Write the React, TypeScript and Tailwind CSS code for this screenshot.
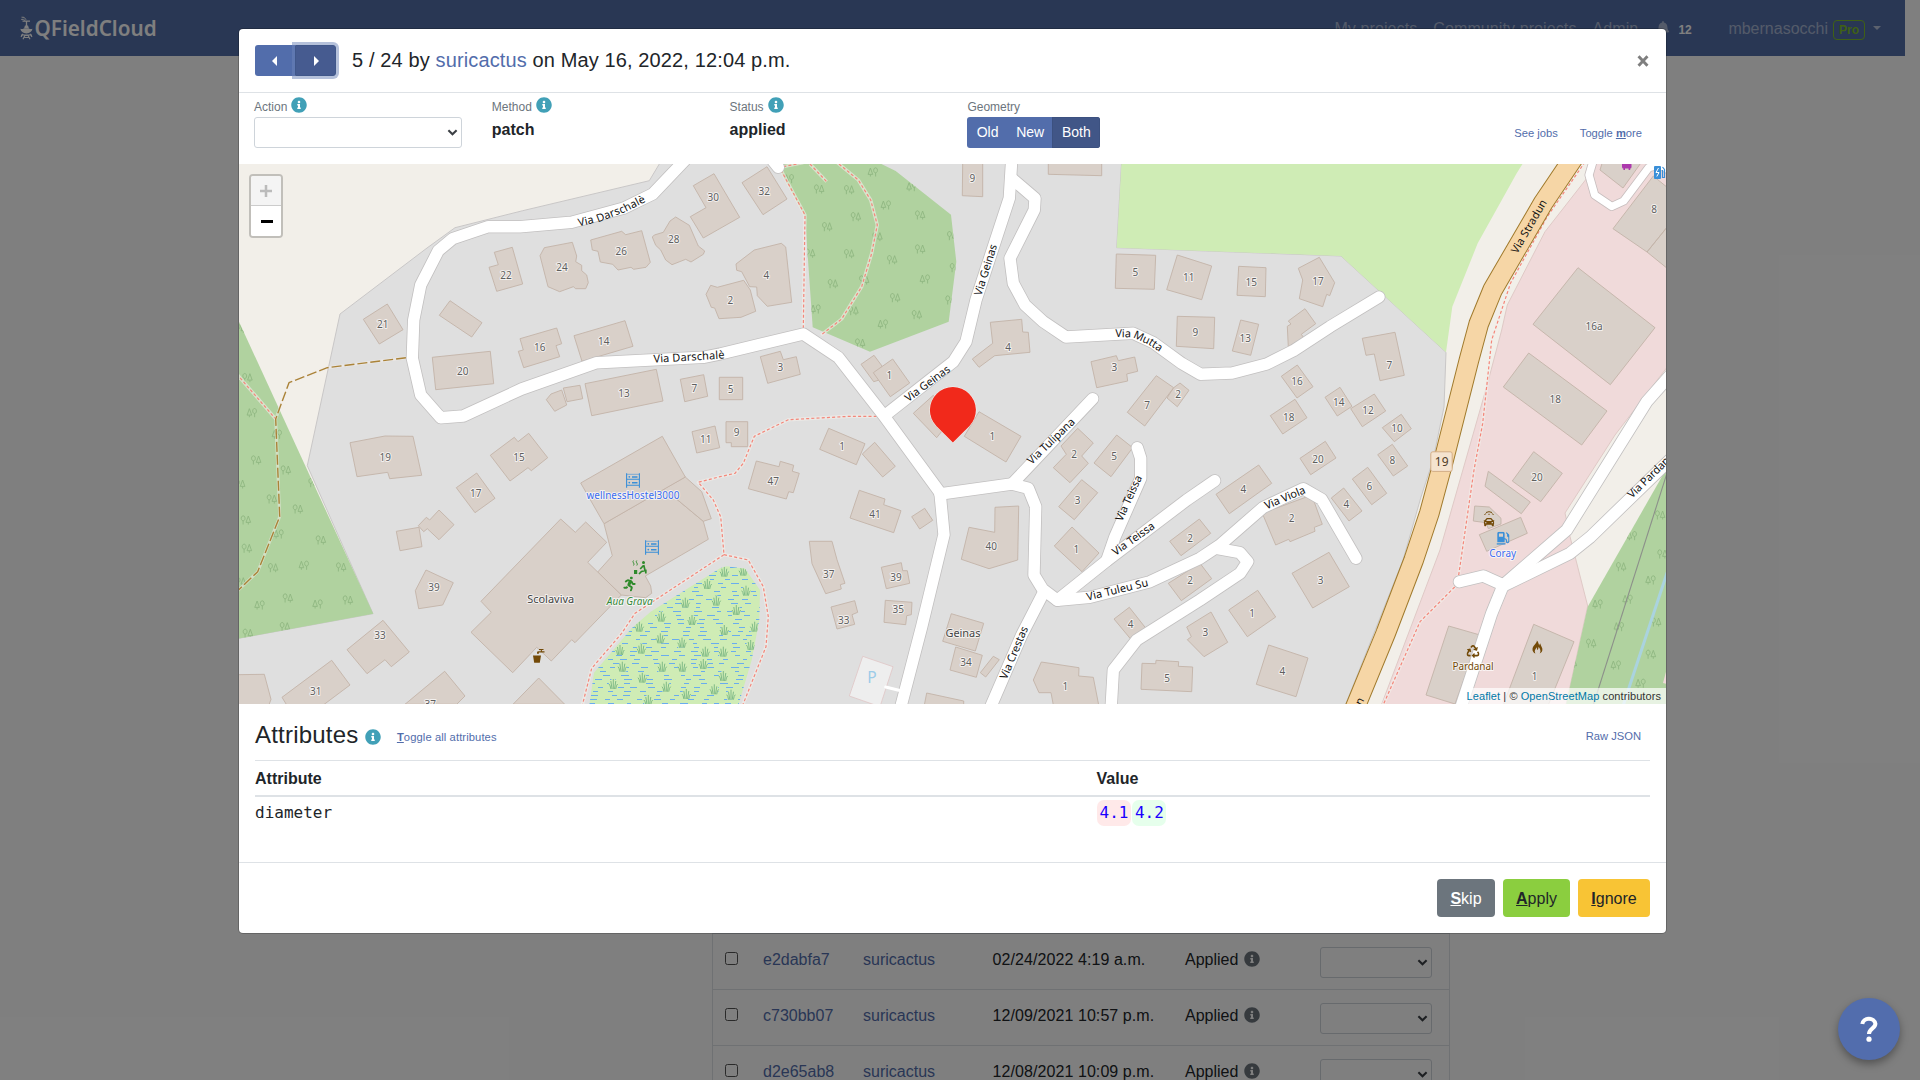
import React from "react";
import { FaRunning, FaRecycle, FaGasPump, FaCar, FaBell, FaInfoCircle } from "react-icons/fa";

type Origin = [number, number];

// Map sheets: every sheet has its own origin; geometry is digitised in thirds of a pixel.
const NW: Origin = [0, 0];
const N: Origin = [520, 90];
const NE: Origin = [1040, 160];
const W: Origin = [230, 300];
const C: Origin = [720, 300];
const E: Origin = [1200, 300];

function xy(o: Origin, x: number, y: number): [number, number] {
  return [+(o[0] + x / 3).toFixed(1), +(o[1] + y / 3).toFixed(1)];
}
function pts(o: Origin, s: string): string {
  return s
    .trim()
    .split(/\s+/)
    .map((p) => {
      const [a, b] = p.split(",").map(Number);
      return xy(o, a, b).join(",");
    })
    .join(" ");
}
function line(...parts: [Origin, string][]): string {
  return parts.map(([o, s]) => pts(o, s)).join(" ");
}

type Building = [Origin, string, string?, number?, number?];

const buildings: Building[] = [
  [NW, "1483,757 1537,742 1568,852 1490,874 1467,802 1495,794", "22", 1518, 826],
  [W, "400,58 472,12 519,89 448,132", "21", 458, 73],
  [W, "660,2 756,68 725,111 628,46"],
  [W, "607,172 781,154 791,251 617,269", "20", 698, 213],
  [W, "870,116 980,84 995,131 978,137 989,170 881,203 865,154 880,150", "16", 929, 143],
  [W, "1032,107 1185,62 1209,139 1056,184", "14", 1121, 124],
  [W, "1065,251 1279,208 1299,303 1085,347", "13", 1182, 279],
  [W, "1351,238 1421,224 1433,289 1364,305", "7", 1393, 265],
  [W, "1000,264 1050,256 1058,296 1011,305"],
  [W, "949,299 963,282 995,270 1010,315 974,334"],
  [W, "360,428 465,408 549,409 575,526 479,536 473,517 381,530", "19", 466, 473],
  [W, "781,466 853,412 864,425 896,400 953,473 904,512 894,503 840,543", "15", 867, 471],
  [W, "679,563 740,519 795,595 735,638", "17", 737, 579],
  [W, "499,694 567,682 576,740 510,752"],
  [W, "565,677 589,652 599,660 627,630 672,674 627,719 592,686 581,695"],
  [W, "588,810 670,848 638,915 566,926 556,872", "39", 612, 861],
  [W, "351,1049 459,961 538,1056 484,1100 465,1079 411,1121", "33", 450, 1007],
  [W, "156,1192 305,1081 360,1155 280,1215 170,1215", "31", 257, 1175],
  [W, "20,1124 103,1123 123,1198 115,1220 20,1220"],
  [W, "525,1213 644,1114 705,1188 680,1213", "37", 601, 1213],
  [W, "849,1213 926,1134 1004,1213"],
  [W, "1386,395 1455,378 1469,443 1400,459", "11", 1427, 419],
  [C, "18,365 83,365 83,440 34,440 34,428 18,428", "9", 50, 398],
  [C, "-2,232 68,232 68,299 -2,299", "5", 32, 267],
  [W, "1122,671 1300,568 1325,585 1420,664 1435,718 1246,828 1262,858 1265,880 1247,893 1174,885 1103,816 1147,767"],
  [W, "1366,531 1415,575 1444,656 1420,664 1325,585 1300,568"],
  [W, "1052,549 1297,409 1366,531 1122,671"],
  [W, "992,657 1036,697 1067,666 1130,727 1073,787 1103,816 1174,885 1035,1028 1025,1019 964,1083 920,1042 848,1118 723,997 784,937 753,904"],
  [N, "73,473 157,457 170,498 167,515 185,526 185,542 200,555 205,578 197,596 167,596 160,590 119,605 84,590 60,497", "24", 126, 533],
  [N, "212,450 305,424 317,434 365,422 391,517 378,532 341,538 333,532 294,540 278,523 241,516 234,484 217,480", "26", 304, 484],
  [N, "397,441 403,435 430,427 450,393 467,381 508,406 535,468 554,483 550,493 513,516 497,508 456,524 437,510 422,480 407,466", "28", 461, 448],
  [N, "520,287 582,251 659,382 550,444 511,380 558,353", "30", 580, 321],
  [N, "666,278 741,230 801,327 729,374", "32", 733, 303],
  [N, "648,522 703,480 784,460 797,471 815,637 742,649 712,617 710,591 689,590 665,545 650,541", "4", 739, 557],
  [N, "572,586 592,592 671,571 691,600 707,664 663,682 597,686 584,654 574,652 558,613", "2", 631, 632],
  [N, "1328,215 1388,215 1388,320 1327,317", "9", 1357, 265],
  [NE, "25,-5 185,-5 185,47 25,43"],
  [NE, "229,282 347,286 343,388 226,385", "5", 286, 337],
  [NE, "412,285 515,318 485,419 380,389", "11", 446, 353],
  [NE, "596,319 678,323 676,410 591,406", "15", 634, 366],
  [NE, "775,325 838,292 884,368 869,407 860,403 848,440 778,416 788,360", "17", 834, 363],
  [NE, "412,469 524,472 521,566 409,559", "9", 466, 518],
  [NE, "602,480 656,493 632,586 577,573", "13", 616, 534],
  [NE, "745,483 795,446 827,491 784,523 791,533 745,560 742,499 753,492"],
  [E, "487,115 585,97 613,226 540,242 523,162 498,166", "7", 568, 196],
  [C, "121,170 181,154 190,179 229,170 241,223 143,250", "3", 181, 203],
  [C, "423,193 462,166 486,198 478,240 461,245"],
  [C, "460,218 518,177 569,249 511,290", "1", 508, 227],
  [C, "811,67 905,58 908,96 925,97 930,157 824,167 777,202 757,177 818,130", "4", 864, 143],
  [C, "1113,185 1189,167 1195,182 1244,171 1253,214 1220,222 1223,243 1130,263", "3", 1183, 202],
  [C, "1309,227 1361,263 1274,378 1222,337", "7", 1281, 317],
  [C, "1380,249 1407,271 1372,320 1341,294 1361,263", "2", 1374, 284],
  [C, "580,340 640,286 700,350 650,413"],
  [C, "777,335 903,409 858,486 733,409", "1", 817, 410],
  [C, "326,385 435,431 409,494 299,448", "1", 366, 440],
  [C, "464,427 526,499 488,531 427,462"],
  [C, "109,483 177,500 181,484 221,496 217,514 238,520 220,578 206,575 199,597 85,566", "47", 160, 543],
  [C, "418,571 495,597 491,614 543,632 521,698 390,654", "41", 465, 644],
  [C, "575,650 614,625 638,661 599,687"],
  [C, "825,622 896,618 893,780 807,806 724,778 747,682 824,697", "40", 814, 739],
  [C, "268,724 336,724 351,779 375,850 361,854 364,867 317,881 276,791", "37", 326, 822],
  [C, "484,802 544,788 548,812 562,812 569,850 499,866", "39", 528, 832],
  [C, "333,921 404,902 413,937 396,944 404,973 351,987", "33", 371, 960],
  [C, "496,901 576,907 574,944 560,947 557,974 492,967", "35", 535, 929],
  [C, "694,941 791,970 766,1053 668,1024"],
  [C, "707,1041 787,1066 769,1132 690,1110", "34", 738, 1088],
  [C, "820,1069 838,1079 797,1131 781,1118"],
  [C, "620,1179 731,1203 731,1220 612,1220"],
  [C, "964,1086 1077,1103 1076,1128 1120,1132 1136,1215 1000,1215 993,1178 957,1178 940,1140", "1", 1036, 1159],
  [C, "1266,1090 1307,1091 1308,1081 1376,1085 1375,1099 1418,1101 1415,1175 1263,1168", "5", 1341, 1136],
  [C, "1073,385 1120,429 1085,468 1105,490 1050,548 1000,503 1039,463 1023,438", "2", 1062, 463],
  [C, "1190,405 1238,443 1173,530 1122,489", "5", 1182, 469],
  [C, "1085,539 1133,578 1063,659 1016,620", "3", 1073, 600],
  [C, "1056,681 1137,759 1086,815 1003,738", "1", 1069, 748],
  [C, "1438,657 1472,700 1383,767 1349,724", "2", 1410, 714],
  [C, "1440,790 1475,836 1384,902 1345,850", "2", 1410, 842],
  [C, "1228,922 1280,988 1236,1022 1182,957", "4", 1232, 973],
  [C, "1400,981 1473,936 1523,1027 1452,1070 1402,1019 1414,1010", "3", 1456, 998],
  [E, "48,583 176,495 215,550 88,641", "4", 130, 569],
  [E, "300,475 376,424 408,474 332,524", "20", 354, 477],
  [E, "211,347 285,298 321,353 248,402", "18", 266, 352],
  [E, "244,229 292,195 339,260 291,294", "16", 291, 245],
  [E, "375,292 420,262 456,319 412,348", "14", 416, 306],
  [E, "452,326 523,282 557,333 487,380", "12", 504, 332],
  [E, "547,383 604,343 634,386 583,425", "10", 591, 386],
  [E, "533,464 577,433 623,498 580,528", "8", 577, 482],
  [E, "457,537 503,502 560,580 515,614", "6", 508, 560],
  [E, "394,594 431,564 486,633 447,663", "4", 439, 614],
  [E, "187,640 335,585 367,673 343,682 345,694 270,725 266,718 227,735", "2", 275, 656],
  [E, "276,820 387,757 448,860 338,924", "3", 362, 842],
  [E, "86,930 173,871 227,951 142,1010", "1", 156, 941],
  [E, "206,1035 324,1074 288,1190 169,1153", "4", 247, 1113],
  [E, "1134,-97 1365,83 1231,254 999,73", "16a", 1182, 80],
  [E, "986,159 1221,333 1145,435 910,261", "18", 1066, 299],
  [E, "1001,455 1087,520 1022,605 937,543", "20", 1011, 532],
  [E, "865,514 991,606 964,641 855,559"],
  [E, "824,618 868,621 903,655 903,672 865,686 858,668 820,663"],
  [E, "838,704 962,652 982,700 860,754"],
  [E, "746,978 840,1005 765,1212 678,1185"],
  [E, "1001,973 1122,1025 1045,1215 910,1215", "1", 1004, 1130],
  [E, "1239,-214 1360,-372 1404,-336 1404,-93 1341,-144", "8", 1362, -273],
  [E, "1341,-144 1404,-222"],
  [E, "1209,-420 1200,-390 1269,-336 1329,-420"],
];

const roads: string[] = [
  line([N, "500,205 398,312 310,355 155,397 0,410"], [NW, "1465,680 1358,716 1315,752 1262,855 1241,960"], [W, "547,175 572,285 632,353 700,348 875,267 1100,188 1420,172"], [C, "0,162 250,102 355,172 490,345 660,578 672,704 605,980 540,1230"]),
  line([N, "1475,210 1468,325 1368,630"], [C, "738,125 700,185 505,338"]),
  line([N, "1478,268 1545,325 1543,360 1470,505 1480,580 1515,645"], [C, "970,65 1038,111 1240,100 1300,128 1385,190 1442,223"], [E, "97,219 200,192 280,152 390,80 537,-9"]),
  line([C, "880,548 1118,296"]),
  line([C, "660,582 875,552 925,565 947,620 942,825 968,868 1012,901 1110,892 1290,845"], [E, "0,775 60,735 190,622 310,566 365,598 468,775"]),
  line([E, "50,745 120,758 143,785 120,820 0,900"], [C, "1250,1020 1180,1110 1173,1230"]),
  line([C, "1012,901 1160,782 1400,600 1484,542"]),
  line([C, "1160,782 1185,710 1262,535 1262,475 1252,443"]),
  line([C, "972,875 905,1005 808,1230"]),
  line([N, "745,195 775,232"]),
  line([E, "778,845 850,828 910,855 1100,690 1340,305 1420,215"]),
  line([E, "910,858 1110,760 1170,712 1440,450"]),
  line([E, "910,855 875,940 780,1230"]),
];

const stradun = line([NE, "1600,-5 1510,128 1358,389 1316,492 1287,600"], [E, "731,480 688,640 641,780 557,1000 461,1233"]);
const lot = "1594,158 1589,175 1594.7,195 1611.8,206.5 1623.7,201 1648.6,167.7 1660,165 1672,172";

const footways: string[] = [
  line([N, "783,240 855,375 850,715"]),
  line([N, "945,212 1015,270 1052,330 1072,405 1055,490 1025,590 965,687 903,735"]),
  line([N, "870,222 920,275"]),
  line([N, "790,230 850,218"]),
  line([C, "470,349 390,349 205,359 103,409 70,490 45,520 0,530"], [W, "1405,547 1450,600 1472,650 1482,764 1215,940 1175,1000 1085,1105 1055,1223"]),
  line([C, "12,764 85,780 130,860 145,950 138,1040 65,1223"]),
  line([W, "20,222 137,357"]),
  "1585,162 1547,217 1510.6,283 " + line([E, "875,120 848,370 822,510 776,825 765,860 660,965 545,1225"]),
];

const track = line([W, "528,173 292,203 177,248 137,357 149,650 83,815 20,875"]);

const woodA = line([W, "20,50 430,941 20,1017"]);
const woodB = line([N, "785,215 1070,215 1127,243 1293,374 1309,515 1286,695 1050,785 878,712 855,380 783,247"]);
const woodC = "1668,466 1587.7,606.7 1565.7,706 1668,706";
const wetland = line([W, "1078,1216 1092,1118 1205,985 1262,935 1470,805 1490,799 1545,806 1590,870 1588,960 1565,1080 1525,1216"]);

// x,y pairs; a trailing "f" mirrors the tree pair.
const trees: [Origin, string][] = [
  [W, "32,85 52,233 66,338f 141,403f 78,480 167,510 30,552 125,597 203,627 47,660 146,702f 272,720 50,745 129,803 222,796f 333,801 32,845 173,894 89,915f 263,912f 353,900 164,980 53,1000 250,548"],
  [N, "807,266f 897,297 987,299 1059,246f 1175,290f 1098,345f 1200,375 1007,380 921,410 1072,440 870,490 987,491 1200,477 1116,509 1296,437 1304,533 1215,567f 938,581 1032,570 1125,623 1291,630 887,657f 1000,662 1190,674 1089,702f 1020,759"],
  [E, "1380,645 1296,707f 1387,762 1263,800 1352,840f 1283,898f 1193,912f 1368,966 1257,980f 1173,1030 1352,1063 1248,1095f 1322,1150f 1115,1090"],
];

const reeds: [Origin, string][] = [
  [W, "1432,852 1483,815 1366,908 1459,902 1294,950 1386,960 1483,990 1291,1015 1356,1028 1234,1046 1426,1055 1480,1055 1177,1100 1297,1100 1357,1100 1420,1092 1150,1152 1237,1133 1309,1160 1369,1182 1480,1128 1453,1168 1255,1200 1170,1050 1228,980"],
  [C, "70,812 78,872 49,930 104,980 92,1035 33,1184"],
];

type Street = [string, string, number, boolean?];
const streets: Street[] = [
  ["Via Darschalè", line([N, "156,405 241,385 321,354 391,318"]), 71],
  ["Via Darschalè", line([W, "1260,180 1494,166"]), 71],
  ["Via Geinas", line([N, "1364,650 1434,430"]), 53],
  ["Via Geinas", line([C, "541,313 706,192"]), 53],
  ["Via Mutta", line([C, "1172,102 1240,103 1290,126 1335,156"]), 50],
  ["Via Tulipana", line([C, "913,503 1076,347"]), 61],
  ["Via Teissa", line([C, "1185,690 1271,500"]), 49],
  ["Via Teissa", line([C, "1165,772 1318,664"]), 49],
  ["Via Tuleu Su", line([C, "1085,897 1300,845"]), 63],
  ["Via Crestas", line([C, "840,1163 928,955"]), 56],
  ["Via Viola", line([E, "179,627 332,563"]), 43],
  ["Via Stradun", line([NE, "1410,302 1528,98"]), 60],
  ["Via Pardanal", line([E, "1290,590 1460,424"]), 62, true],
  ["Via Stradun", line([E, "391,1374 496,1176"]), 60],
];

function d(points: string) {
  return "M" + points.split(" ").join(" L");
}

function each(list: [Origin, string][], fn: (x: number, y: number, flip: boolean, key: string) => React.ReactNode) {
  return list.flatMap(([o, s], i) =>
    s.split(" ").map((p, j) => {
      const flip = p.endsWith("f");
      const [a, b] = p.replace("f", "").split(",").map(Number);
      const [x, y] = xy(o, a, b);
      return fn(x, y, flip, `${i}-${j}`);
    })
  );
}

function waterDashes() {
  const out: string[] = [];
  let seed = 11;
  const rnd = () => {
    seed = (seed * 16807) % 2147483647;
    return seed / 2147483647;
  };
  for (let y = 567; y < 704; y += 4) {
    let x = 585 + rnd() * 14;
    while (x < 765) {
      const w = 4 + rnd() * 4;
      out.push(`M${x.toFixed(0)} ${y + 0.5}h${w.toFixed(0)}`);
      x += w + 6 + rnd() * 11;
    }
  }
  return out.join("");
}

function HostelIcon({ x, y }: { x: number; y: number }) {
  return (
    <g transform={`translate(${x} ${y})`} stroke="#3a8fd8" fill="#3a8fd8">
      <path d="M.6 0V14.5M13.4 0V14.5M1 6h12.5M1 12h12.5" strokeWidth="1.1" fill="none" />
      <path d="M1 1h12.5" strokeWidth=".6" />
      <circle cx="3.3" cy="3.5" r=".9" stroke="none" />
      <circle cx="3.3" cy="9.3" r=".9" stroke="none" />
      <path d="M6 3.6h5.5M6 9.4h5.5" strokeWidth="1.5" />
    </g>
  );
}

function MapView() {
  return (
    <svg className="block h-[540px] w-[1427px]" viewBox="239 164 1427 540" fontFamily="'Noto Sans', sans-serif">
      <defs>
        <clipPath id="wood">
          <polygon points={woodA} />
          <polygon points={woodB} />
          <polygon points={woodC} />
        </clipPath>
        <clipPath id="wet">
          <polygon points={wetland} />
        </clipPath>
      </defs>

      <rect x="239" y="164" width="1427" height="540" fill="#f2efe9" />
      <polygon
        points="307.3,465.7 340,314 427,248 455,227.7 522.7,210.7 649.3,180.7 661.7,160 1121.7,160 1116.7,247.7 1341,256 1446,352.3 1444,407 1433,460 1421,497 1403,560 1345,706 235,706 235,639 373,613.7"
        fill="#dfdfdf"
        stroke="#c9c7c7"
        strokeWidth="1"
      />
      <polygon points={line([NE, "245,0 230,263 903,288 1218,577 1237,440 1313,250 1430,40 1455,0"])} fill="#cfecb5" />
      <polygon
        points="1593,160 1587,178 1545,231.7 1507.3,305 1501.7,330 1486.7,386.7 1440,550 1381,706 1565.7,706 1587.7,606 1570,536.7 1565,513 1615,435 1668,366 1668,160"
        fill="#f0dada"
        stroke="#dfc9c6"
        strokeWidth="1"
      />
      <g fill="#b0d29f">
        <polygon points={woodA} />
        <polygon points={woodB} />
        <polygon points={woodC} />
      </g>
      <polygon points={wetland} fill="#cfecb5" />
      <g clipPath="url(#wet)" fill="none">
        <path d={waterDashes()} stroke="#69adee" strokeWidth="1" />
        {each(reeds, (x, y, _f, k) => (
          <g key={k} transform={`translate(${x} ${y})`}>
            <path d="M-4 5L-4.500-1L-2.500-4L0-6L2.500-4L4.500-1L4 5Z" fill="#cfecb5" />
            <path
              d="M0 5V-5M-1.2 5L-2.5-3M1.2 5L2.5-3M-2.4 5Q-3 1-4.3 0M2.4 5Q3 1 4.3 0"
              stroke="#76b481"
              strokeWidth=".9"
            />
          </g>
        ))}
      </g>
      <g clipPath="url(#wood)" fill="none" stroke="#8fb781" strokeWidth=".9">
        {each(trees, (x, y, f, k) => (
          <path
            key={k}
            transform={`translate(${x} ${y}) scale(${f ? -1 : 1} 1)`}
            d="M-2.6 4.500V.8M-2.6 .8A1.900 2.500 0 1 1 -2.500 .8M2.6 4.500V2.6M2.6-4L4.900 2.4H.3Z"
          />
        ))}
      </g>
      <polyline points={line([E, "1404,510 1180,1215"])} stroke="#8c8f8a" strokeWidth="1.1" fill="none" />
      <polyline points={line([E, "1404,810 1270,1215"])} stroke="#aad3df" strokeWidth="3" fill="none" />
      <polygon points="1663,683 1667,668 1667,684" fill="#f0dada" />
      <polygon points={line([C, "428,1069 519,1100 480,1220 388,1188"])} fill="#eeeeee" stroke="#e0c5c5" strokeWidth=".8" />

      <g fill="#d9d0c9" stroke="#c3b3a8" strokeWidth=".9" strokeLinejoin="round">
        {buildings.map(([o, s], i) => (
          <polygon key={i} points={pts(o, s)} />
        ))}
      </g>

      <g fill="none" strokeLinejoin="round">
        {footways.map((p, i) => (
          <g key={i}>
            <polyline points={p} stroke="#f3eeea" strokeOpacity=".6" strokeWidth="3.4" />
            <polyline points={p} stroke="#f4867a" strokeWidth="1.2" strokeDasharray="3 2.2" />
          </g>
        ))}
        <polyline points={track} stroke="#f3eeea" strokeOpacity=".5" strokeWidth="3" />
        <polyline points={track} stroke="#aa8338" strokeWidth="1.4" strokeDasharray="10 3" />
      </g>

      <g fill="none" strokeLinejoin="round" strokeLinecap="round">
        {roads.map((p, i) => (
          <polyline key={i} points={p} stroke="#c2c0c0" strokeWidth="13" />
        ))}
        <polyline points={lot} stroke="#c7bebe" strokeWidth="9" />
        {roads.map((p, i) => (
          <polyline key={i} points={p} stroke="#ffffff" strokeWidth="11.4" />
        ))}
        <polyline points={lot} stroke="#ffffff" strokeWidth="7.4" />
        <polyline points={line([C, "497,1161 545,1173"])} stroke="#ffffff" strokeWidth="3" />
        <polyline points={stradun} stroke="#a07a2c" strokeWidth="20.6" />
        <polyline points={stradun} stroke="#f6d6a6" strokeWidth="18.6" />
      </g>

      <g fill="#5f5f5f" fontSize="10" textAnchor="middle" stroke="#ffffff" strokeOpacity=".7" strokeWidth="2" strokeLinejoin="round" paintOrder="stroke">
        {buildings.map(([o, , t, a, b], i) => {
          if (!t) return null;
          const [x, y] = xy(o, a!, b!);
          return (
            <text key={i} x={x} y={y + 3.6}>
              {t}
            </text>
          );
        })}
        <text x="550.7" y="602.8" fontSize="11" fill="#444" textLength="47">
          Scolaviva
        </text>
        <text x="963" y="636.8" fontSize="11" fill="#444" textLength="35">
          Geinas
        </text>
        <text x="633" y="499.2" fill="#3b6cf0" textLength="93">
          wellnessHostel3000
        </text>
        <text x="629.8" y="605" fill="#35883a" fontStyle="italic" textLength="46">
          Aua Grava
        </text>
        <text x="1502.7" y="557.3" fill="#3b6cf0" textLength="27">
          Coray
        </text>
        <text x="1473" y="670.2" fill="#734a08" textLength="41">
          Pardanal
        </text>
        <text x="872" y="682.6" fontSize="15.5" fill="#9ccbe8" stroke="none">
          P
        </text>
      </g>

      <g fill="#111111" fontSize="11">
        {streets.map(([name, p, len, start], i) => (
          <g key={i}>
            <path id={`street-${i}`} d={d(p)} fill="none" />
            <text dy="3" textAnchor={start ? "start" : "middle"}>
              <textPath href={`#street-${i}`} startOffset={start ? "0%" : "50%"} textLength={len}>
                {name}
              </textPath>
            </text>
          </g>
        ))}
      </g>

      <rect x="1430.8" y="451.8" width="21.4" height="19.6" rx="2" fill="#f5e3cf" stroke="#d3ad86" />
      <text x="1441.7" y="466.2" fontSize="12" textAnchor="middle" fill="#4f3c28">
        19
      </text>

      <HostelIcon x={626} y={473.3} />
      <HostelIcon x={645} y={540.3} />
      <FaRunning x={622} y={576.5} size={15} color="#2f8a2b" />
      <g fill="#2f8a2b" stroke="#2f8a2b">
        <rect x="634" y="570" width="3.2" height="4" stroke="none" />
        <path d="M633.5 560.5q-1.2 1.3 0 2.4t0 2.6M636.8 560.5q-1.2 1.3 0 2.4t0 2.6" fill="none" strokeWidth=".9" />
        <circle cx="643.5" cy="562.4" r="1.5" stroke="none" />
        <path d="M643.7 565L645 570.3M643.5 565.5L640.2 569M645.8 573.5V570.5L641.5 571.5L639 574" fill="none" strokeWidth="1.7" />
      </g>
      <g fill="#734a08">
        <path d="M533 655.5h8l-1.2 7.3h-5.6z" />
        <path d="M537 653.8v-1.3q0-1.2 1.5-1.2h6v1.2h-5.6v1.3zM539 649h4.5v1h-1.6v1.6h-1V650H539z" />
      </g>
      <FaRecycle x={1466.5} y={645} size={13} color="#734a08" />
      <path
        d="M1536.800 640.500c.6 2.600-3.800 4.500-4.300 8.200-.3 2.500 1.200 4.200 2.900 4.800-1.500-2.400-.2-4.300 1.600-6.300.2 1.300-.3 2 .3 2.700 1-.6 1.300-2 1.200-3.200 1.600 1.900 2.900 4.500 1.100 6.900 1.900-.6 3.200-2.500 2.700-5-.4-2.200-1.900-3.200-1.900-5.100-.9.500-1.200 1.300-1.100 2.300-.8-1.900-.8-4-2.500-5.300z"
        fill="#734a08"
      />
      <FaCar x={1483.5} y={516.5} size={11} color="#734a08" />
      <path d="M1484.5 515l1.3-1.6M1489 515v-1.2M1493.5 515l-1.3-1.6M1486 512.5q3-1.6 6 0" stroke="#734a08" strokeWidth="1" fill="none" />
      <FaGasPump x={1496.5} y={531.8} size={13} color="#3a8fd8" />
      <rect x="1622" y="160" width="9.5" height="8.5" rx="1.5" fill="#ac39ac" />
      <path d="M1624.2 168v2M1629.4 168v2" stroke="#ac39ac" strokeWidth="1.6" />
      <rect x="1654" y="166" width="7" height="13" rx="1" fill="#3a8fd8" />
      <path d="M1658.5 168l-2.5 4.5h3l-2.2 4" stroke="#fff" fill="none" />
      <path d="M1662.5 170v7.5h2v-8l-2-2.5" stroke="#3a8fd8" fill="none" strokeWidth="1.2" />

      <path
        d="M952.9 442.4L936.3 426A23 23 0 1 1 969.5 426Z"
        fill="#f1291b"
        stroke="#ffffff"
        strokeOpacity=".8"
        strokeWidth="1"
        paintOrder="stroke"
      />
    </svg>
  );
}

function Chevron() {
  return (
    <svg className="h-[7px] w-[11px]" viewBox="0 0 11 7" fill="none">
      <path d="M1.4 1.2L5.5 5.2L9.6 1.2" stroke="#3b3f44" strokeWidth="2.1" />
    </svg>
  );
}

function Select({ className }: { className: string }) {
  return (
    <div className={`flex h-[31px] items-center justify-end rounded-[3px] border border-[#ced4da] bg-white pr-[3px] ${className}`}>
      <Chevron />
    </div>
  );
}

function Field({ label, info, children }: { label: string; info?: boolean; children: React.ReactNode }) {
  return (
    <div className="w-[237.8px] px-[15px]">
      <div className="flex h-6 items-center gap-1 text-[12px] text-[#6c757d]">
        <span className="pt-[4px]">{label}</span>
        {info && <FaInfoCircle size={16} color="#41a0b7" className="-mt-[1px]" />}
      </div>
      {children}
    </div>
  );
}

const rows = [
  ["e2dabfa7", "02/24/2022 4:19 a.m."],
  ["c730bb07", "12/09/2021 10:57 p.m."],
  ["d2e65ab8", "12/08/2021 10:09 p.m."],
];

function Logo() {
  return (
    <div className="flex items-center text-white">
      <svg className="h-6 w-[13px]" viewBox="0 0 13 24" fill="none" stroke="currentColor">
        <path d="M1.5 1.2q3-1 4.6 2.6M1.2 3.4q2.6-.8 4 1.3" strokeWidth="1" />
        <path d="M2.5 5.2h7.5M6.5 4.5v7" strokeWidth="1.3" />
        <path d="M5 9.4h3l1 3H4z" fill="currentColor" stroke="none" />
        <path d="M.3 12.8q2 .8 3.4-.4h5.2q1.7 1.2 3.6.4-1 4.4-6.1 4.6Q1.2 17.2.3 12.8z" fill="currentColor" stroke="none" />
        <path d="M1 19h11M3 17.8l-2 3M10 17.8l2 3M3 23.3l2-4h3l2 4M4 21.5h5" strokeWidth="1.2" />
      </svg>
      <span className="ml-[1.5px] font-['Noto_Sans'] text-[20.7px] leading-none font-semibold">QFieldCloud</span>
    </div>
  );
}

function Page() {
  return (
    <div className="h-[1080px] w-[1905px] overflow-hidden">
      <header className="flex h-14 items-center bg-[#526ea8] pl-5 text-[16px] text-white/50">
        <div className="flex-1">
          <Logo />
        </div>
        <nav className="flex items-center gap-4 pt-[2px] tracking-[0.1px]">
          <span>My projects</span>
          <span>Community projects</span>
          <span>Admin</span>
        </nav>
        <FaBell className="ml-[18px]" size={14} />
        <span className="ml-[8px] w-[50px] pt-[3px] text-[12px] font-bold text-white">12</span>
        <span className="pt-[1px]">mbernasocchi</span>
        <span className="mt-1 ml-[5px] rounded-[4px] border border-[#7fc02a] px-[5px] py-[1px] text-[12px] leading-[16px] font-bold text-[#7fc02a]">
          Pro
        </span>
        <span className="mr-[24px] ml-[8px] border-x-[4px] border-t-[4.5px] border-x-transparent border-t-white/60" />
      </header>
      <main className="pt-[877px] pl-[712px]">
        <div className="w-[738px] border-x border-[#dee2e6]">
          {rows.map(([id, date]) => (
            <div key={id} className="flex h-14 items-start border-t border-[#dee2e6] text-[16px] text-[#212529]">
              <div className="mt-[18px] ml-[12px] h-[13px] w-[13px] rounded-[2.5px] border border-[#555] bg-white" />
              <span className="ml-[25px] w-[100px] pt-[14px] text-[#526dab]">{id}</span>
              <span className="w-[129.5px] pt-[14px] text-[#526dab]">suricactus</span>
              <span className="w-[192.5px] pt-[14px] tracking-[0.08px]">{date}</span>
              <span className="flex w-[135px] items-center gap-[5.5px] pt-[14px]">
                Applied
                <FaInfoCircle size={16} color="#6c757d" className="-mt-[2px]" />
              </span>
              <Select className="mt-[13px] w-[112px]" />
            </div>
          ))}
        </div>
      </main>
    </div>
  );
}

function Header() {
  return (
    <div className="flex h-[64px] items-center border-b border-[#dee2e6] px-4">
      <div className="flex h-[31px] text-white">
        <div className="flex w-[40px] items-center justify-center rounded-l-[3px] bg-[#526dab] pr-[1px]">
          <span className="border-y-[5px] border-r-[5.5px] border-y-transparent border-r-white" />
        </div>
        <div className="z-10 flex w-[41px] items-center justify-center rounded-r-[3px] border border-[#40578a] bg-[#465b90] pl-[2px] shadow-[0_0_0_3px_rgba(108,131,184,0.5)]">
          <span className="border-y-[5px] border-l-[5.5px] border-y-transparent border-l-white" />
        </div>
      </div>
      <h5 className="ml-4 flex-1 pb-[2px] text-[20px] tracking-[0.125px] whitespace-nowrap text-[#212529]">
        5 / 24 by <span className="text-[#526dab]">suricactus</span> on May 16, 2022, 12:04 p.m.
      </h5>
      <svg className="mr-[1px] h-[12px] w-[12px]" viewBox="0 0 11 11">
        <path d="M1.4 1.2l8.2 8.6M9.6 1.2l-8.2 8.6" stroke="#7f7f7f" strokeWidth="2.7" />
      </svg>
    </div>
  );
}

function Modal() {
  return (
    <div className="flex h-[904px] w-[1427px] flex-col overflow-hidden rounded-[4px] bg-white shadow-[0_0_0_1px_rgba(0,0,0,0.2)]">
      <Header />
      <div className="flex h-[71px]">
        <Field label="Action" info>
          <Select className="w-[208px]" />
        </Field>
        <Field label="Method" info>
          <div className="text-[16px] leading-[25px] font-bold text-[#212529]">patch</div>
        </Field>
        <Field label="Status" info>
          <div className="text-[16px] leading-[25px] font-bold text-[#212529]">applied</div>
        </Field>
        <Field label="Geometry">
          <div className="flex h-[31px] w-[133px] overflow-hidden rounded-[3px] text-[14px] leading-[30px] text-white">
            <span className="w-[40.5px] bg-[#526dab] text-center">Old</span>
            <span className="w-[44.5px] bg-[#526dab] text-center">New</span>
            <span className="w-[48px] border border-[#3c5180] bg-[#415687] text-center leading-[28px]">Both</span>
          </div>
        </Field>
        <div className="flex flex-1 justify-end gap-[22px] pt-[32px] pr-6 text-[11.2px] text-[#526dab]">
          <span>See jobs</span>
          <span>
            Toggle <b className="underline">m</b>ore
          </span>
        </div>
      </div>

      <div className="relative h-[540px]">
        <MapView />
        <div className="absolute top-[10px] left-[10px] rounded-[4px] border-2 border-black/20 bg-clip-padding">
          <div className="flex h-[30px] w-[30px] items-center justify-center rounded-t-[2px] border-b border-[#ccc] bg-[#f4f4f4]">
            <svg className="h-3 w-3" viewBox="0 0 12 12">
              <path d="M6 0v12M0 6h12" stroke="#bbb" strokeWidth="2.5" />
            </svg>
          </div>
          <div className="flex h-[30px] w-[30px] items-center justify-center rounded-b-[2px] bg-white pl-[1px]">
            <span className="h-[3px] w-3 bg-black" />
          </div>
        </div>
        <div className="absolute right-0 bottom-0 bg-white/70 px-[5px] text-[11px] leading-[16.5px] tracking-[0.08px] text-[#333]">
          <span className="text-[#0078a8]">Leaflet</span> | © <span className="text-[#0078a8]">OpenStreetMap</span> contributors
        </div>
      </div>

      <div className="flex-1 px-4 pt-[13px]">
        <div className="flex h-[43px] items-start text-[11.2px] text-[#526dab]">
          <h4 className="text-[24px] leading-[36px] tracking-[0.2px] text-[#212529]">Attributes</h4>
          <FaInfoCircle size={16} color="#41a0b7" className="mt-[12px] ml-[7px]" />
          <span className="mt-[12px] ml-[15.5px] flex-1 tracking-[0.1px]">
            <b className="underline">T</b>oggle all attributes
          </span>
          <span className="mt-[11px] mr-[9px]">Raw JSON</span>
        </div>
        <div className="grid grid-cols-[841.5px_1fr] border-t border-[#dee2e6] text-[16px] text-[#212529]">
          <div className="h-[36px] border-b-2 border-[#dee2e6] pt-[6px] font-bold">Attribute</div>
          <div className="h-[36px] border-b-2 border-[#dee2e6] pt-[6px] font-bold">Value</div>
          <div className="pt-[4px] font-['DejaVu_Sans_Mono']">diameter</div>
          <div className="flex pt-[3px] font-['DejaVu_Sans_Mono'] text-[#1a00ff]">
            <span className="h-[26px] rounded-[7px] bg-[#ffe9e9] px-[3px] pt-[1px]">4.1</span>
            <span className="ml-[1px] h-[26px] rounded-[7px] bg-[#e6ffec] px-[2.5px] pt-[1px]">4.2</span>
          </div>
        </div>
      </div>

      <div className="flex h-[71px] items-center justify-end gap-2 border-t border-[#dee2e6] px-4 text-[16px]">
        <span className="flex h-[38px] w-[58px] items-center justify-center rounded-[4px] bg-[#6c757d] pt-[1px] text-white">
          <b className="underline">S</b>kip
        </span>
        <span className="flex h-[38px] w-[67px] items-center justify-center rounded-[4px] bg-[#8bce3f] pt-[1px] text-[#212529]">
          <b className="underline">A</b>pply
        </span>
        <span className="flex h-[38px] w-[72px] items-center justify-center rounded-[4px] bg-[#f8c435] pt-[1px] text-[#212529]">
          <b className="underline">I</b>gnore
        </span>
      </div>
    </div>
  );
}

export default function App() {
  return (
    <div className="relative h-[1080px] w-[1920px] overflow-hidden bg-white font-['Liberation_Sans',Arial,sans-serif]">
      <Page />
      <div className="absolute inset-0 bg-black/50 pt-[29px] pl-[239px]">
        <Modal />
      </div>
      <div className="absolute top-[998px] left-[1838px] flex h-[62px] w-[62px] items-center justify-center rounded-full bg-[#526dad] shadow-[0_4px_8px_rgba(0,0,0,0.35)]">
        <svg className="h-[26px] w-[18px]" viewBox="0 0 18 26" fill="none">
          <path d="M2.3 8A6.6 6 0 0 1 15.4 7.8C15.4 12.5 9 12.3 9 18" stroke="#fff" strokeWidth="4" />
          <circle cx="9" cy="23.2" r="2.6" fill="#fff" />
        </svg>
      </div>
    </div>
  );
}
